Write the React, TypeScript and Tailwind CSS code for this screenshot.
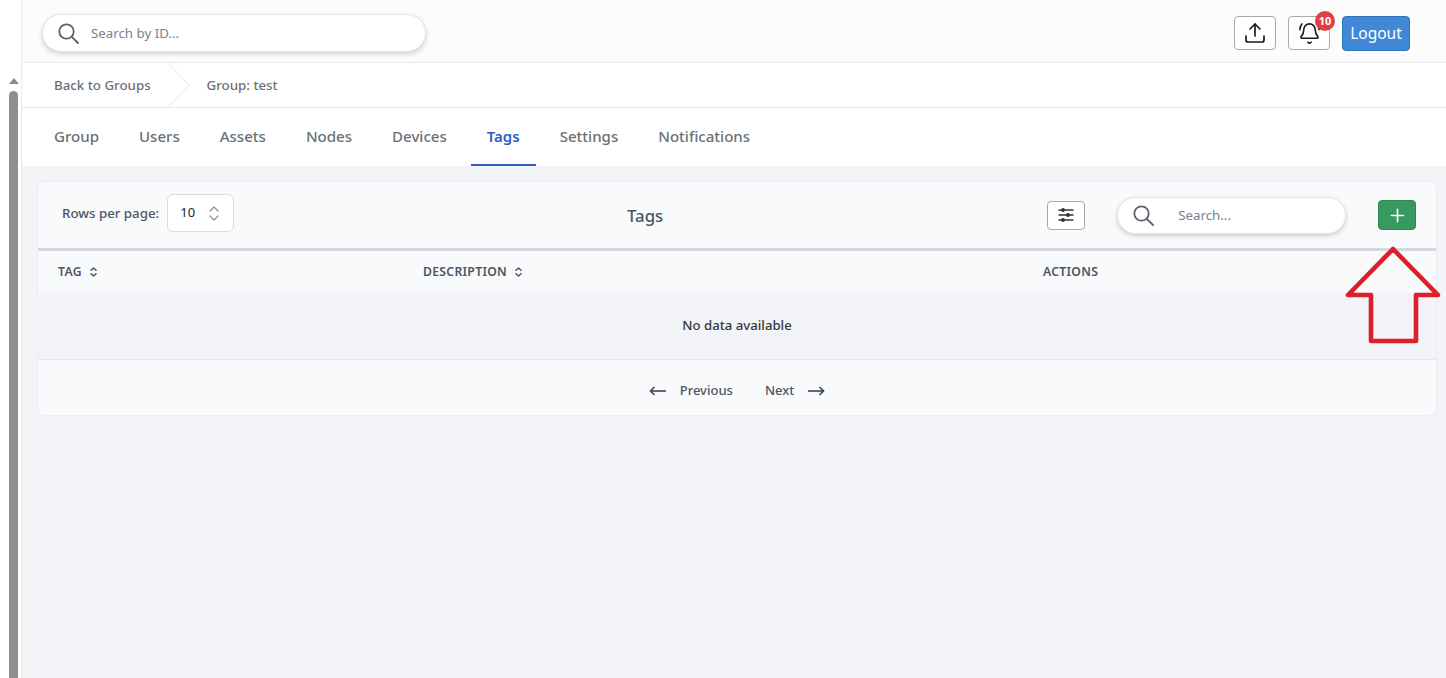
import { BellRing, Plus, Upload } from "lucide-react"

const tabs = ["Group", "Users", "Assets", "Nodes", "Devices", "Tags", "Settings", "Notifications"]

function SortIcon() {
  return (
    <svg width="7" height="10" viewBox="0 0 7 10" fill="none" stroke="#4b5563" strokeWidth="1.5" strokeLinecap="round" strokeLinejoin="round">
      <path d="M1 3.2 3.5 1 6 3.2" />
      <path d="M1 6.8 3.5 9 6 6.8" />
    </svg>
  )
}

function SearchGlyph() {
  return (
    <svg width="21" height="21" viewBox="0 0 21 21" fill="none" stroke="#5a616b" strokeWidth="1.8" strokeLinecap="round" className="shrink-0">
      <circle cx="8.5" cy="8.5" r="7.2" />
      <path d="M13.8 13.8 20 20" />
    </svg>
  )
}

function PillSearch({ placeholder, className }: { placeholder: string; className: string }) {
  return (
    <div className={`flex items-center rounded-full border border-[#e2e4e8] bg-white pl-[15px] shadow-[0_2px_5px_rgba(0,0,0,0.18)] ${className}`}>
      <SearchGlyph />
      <span className="pt-[1px] text-[13.3px] text-[#7b818a]">{placeholder}</span>
    </div>
  )
}

function Arrow({ flip }: { flip?: boolean }) {
  return (
    <svg width="17" height="10" viewBox="0 0 17 10" fill="none" stroke="#3f4650" strokeWidth="1.6" className={flip ? "-scale-x-100" : ""}>
      <path d="M17 5H1.5" />
      <path d="M5.5 1 1.5 5 5.5 9" />
    </svg>
  )
}

export default function App() {
  return (
    <div className="relative flex h-[678px] w-[1446px] overflow-hidden bg-white font-['Noto_Sans','Open_Sans',sans-serif] text-[#4b5563]">
      {/* 왼쪽 사이드바 끝부분 + 스크롤바 */}
      <aside className="flex w-[22px] shrink-0 flex-col items-center border-r border-[#e8eaee] bg-white pt-[78px] pl-[6px]">
        <div className="h-0 w-0 border-x-[5px] border-b-[6px] border-x-transparent border-b-[#8a8a8a]" />
        <div className="mt-[7px] h-[590px] w-[9px] rounded-t-[5px] bg-[#8f8f8f]" />
      </aside>

      <main className="flex min-w-0 flex-1 flex-col bg-[#f3f4f8]">
        <header className="flex h-[63px] shrink-0 items-center justify-between border-b border-[#e8e9ec] bg-[#fcfcfd] pt-[4px] pr-[36px] pl-[20px]">
          <PillSearch placeholder="Search by ID..." className="h-[38px] w-[384px] gap-[12px]" />
          <div className="flex items-center gap-[12px]">
            <button className="flex h-[34px] w-[42px] items-center justify-center rounded-[4px] border border-[#a9a9a9] bg-white text-[#1b1b1b]">
              <Upload size={24} strokeWidth={1.7} />
            </button>
            <div className="relative">
              <button className="flex h-[34px] w-[42px] items-center justify-center rounded-[4px] border border-[#a9a9a9] bg-white text-[#1b1b1b]">
                <BellRing size={23} strokeWidth={1.7} />
              </button>
              <span className="absolute -top-[5px] -right-[5px] flex h-[20px] w-[20px] items-center justify-center rounded-full bg-[#e23f44] text-[11px] font-bold text-white">
                10
              </span>
            </div>
            <button className="h-[35px] w-[68px] rounded-[4px] border border-[#2f73b8] bg-[#4189d8] pt-[1px] text-[15.5px] text-white">
              Logout
            </button>
          </div>
        </header>

        <nav className="flex h-[45px] shrink-0 items-center border-b border-[#e8e9ec] bg-white pl-[32px] text-[13.3px] font-medium text-[#6b7078]">
          <span className="pt-[1px]">Back to Groups</span>
          <svg width="24" height="44" viewBox="0 0 24 44" fill="none" stroke="#e6e7ea" className="mx-[16px]">
            <path d="M1 0 22 22 1 44" />
          </svg>
          <span className="pt-[1px]">Group: test</span>
        </nav>

        <div className="flex h-[58px] shrink-0 gap-[40px] bg-white pl-[32px]">
          {tabs.map((tab) => (
            <div
              key={tab}
              className={
                tab === "Tags"
                  ? "-mx-[16px] flex items-center border-b-2 border-[#2b5fc4] px-[16px] text-[15px] font-semibold text-[#2b5fc4]"
                  : "flex items-center pb-[2px] text-[15.05px] font-medium text-[#6b7078]"
              }
            >
              {tab}
            </div>
          ))}
        </div>

        <section className="mt-[15px] ml-[15px] w-[1400px] overflow-hidden rounded-[8px] border border-[#eceef2] bg-[#f9fafc]">
          <div className="relative flex h-[69px] items-center border-b-[3px] border-[#d6d8de] pl-[24px]">
            <span className="mb-[3px] text-[13.3px] font-medium text-[#4b5563]">Rows per page:</span>
            <div className="mb-[4px] ml-[8px] flex h-[38px] w-[67px] items-center justify-between rounded-[6px] border border-[#d9dbe0] bg-white pr-[14px] pl-[12px] text-[13px] text-[#1f2329]">
              10
              <svg width="10" height="15" viewBox="0 0 10 15" fill="none" stroke="#8b8f96" strokeWidth="1.2" strokeLinecap="round" strokeLinejoin="round">
                <path d="M1 5 5 1 9 5" />
                <path d="M1 10 5 14 9 10" />
              </svg>
            </div>
            <h2 className="absolute left-[589px] pt-[2px] text-[16.8px] font-medium text-[#4b5563]">Tags</h2>
            <button className="ml-[813px] flex h-[29px] w-[38px] items-center justify-center rounded-[4px] border border-[#a9a9a9] bg-white">
              <svg width="16" height="14" viewBox="0 0 16 14" fill="#333" stroke="#333" strokeWidth="1.4">
                <path d="M0.5 2H15.5M0.5 7H15.5M0.5 12H15.5" />
                <circle cx="5" cy="2" r="1.2" />
                <circle cx="10" cy="7" r="1.2" />
                <circle cx="5" cy="12" r="1.2" />
              </svg>
            </button>
            <PillSearch placeholder="Search..." className="ml-[32px] h-[37px] w-[229px] gap-[24px]" />
            <button className="ml-[32px] flex h-[30px] w-[38px] items-center justify-center rounded-[4px] border border-[#2d8656] bg-[#38995f] text-white">
              <Plus size={21} strokeWidth={1.8} />
            </button>
          </div>

          <div className="flex h-[41px] items-center pt-[2px] text-[12.2px] font-semibold tracking-[0.3px] text-[#4b5563]">
            <div className="flex w-[385px] items-center gap-[8px] pl-[20px]">
              TAG <SortIcon />
            </div>
            <div className="flex w-[620px] items-center gap-[8px]">
              DESCRIPTION <SortIcon />
            </div>
            <div>ACTIONS</div>
          </div>

          <div className="flex h-[68px] items-center justify-center border-b border-[#e6e7ea] bg-[#f3f4f8] text-[13.2px] font-medium text-[#33373d]">
            No data available
          </div>

          <div className="flex h-[55px] items-center justify-center gap-[32px] pt-[6px] text-[13px] font-medium text-[#4b5563]">
            <span className="flex items-center gap-[14px]">
              <Arrow />
              Previous
            </span>
            <span className="flex items-center gap-[14px]">
              Next
              <Arrow flip />
            </span>
          </div>
        </section>
      </main>

      {/* 스크린샷 위에 그려진 빨간 화살표 */}
      <svg width="100" height="100" viewBox="0 0 100 100" fill="none" className="absolute top-[246px] left-[1345px]">
        <path d="M48 3 3 49H26V95H71V49H93Z" stroke="#d9202c" strokeWidth="4.6" strokeLinejoin="round" />
      </svg>
    </div>
  )
}
